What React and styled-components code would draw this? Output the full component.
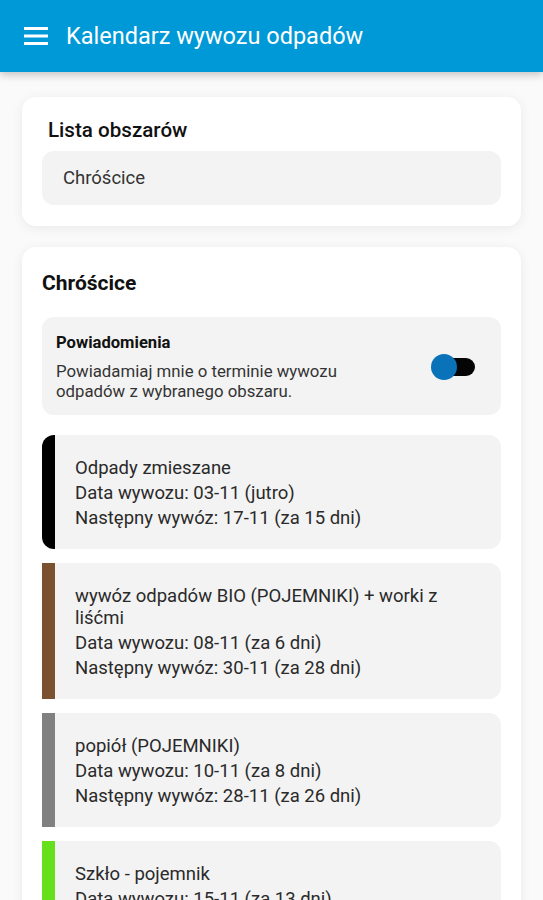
import React from 'react';
import styled, { createGlobalStyle } from 'styled-components';

const GlobalStyle = createGlobalStyle`
  body {
    margin: 0;
    background-color: #fafafa;
    font-family: Roboto, "Noto Sans", sans-serif;
    color: #222;
  }
`;

const AppBar = styled.header`
  height: 72px;
  background-color: #0099d7;
  display: flex;
  align-items: center;
  padding: 0 24px;
  gap: 18px;
  box-shadow: 0 3px 8px rgba(0, 0, 0, 0.22);
  position: relative;
`;

const MenuIcon = styled.svg`
  width: 24px;
  height: 24px;
  display: block;
`;

const Title = styled.h1`
  margin: 0;
  font-size: 23.5px;
  font-weight: 400;
  color: #ffffff;
`;

const Content = styled.main`
  padding: 25px 22px 0;
  display: flex;
  flex-direction: column;
  gap: 21px;
`;

const Card = styled.section`
  background-color: #ffffff;
  border-radius: 14px;
  padding: 21px 20px 21px;
  box-shadow: 0 2px 12px rgba(0, 0, 0, 0.07);
`;

const CardLabel = styled.h2`
  margin: 0 0 9px 6px;
  font-size: 20.6px;
  line-height: 24px;
  font-weight: 500;
  color: #111;
`;

const Select = styled.div`
  height: 54px;
  border-radius: 12px;
  background-color: #f3f3f3;
  display: flex;
  align-items: center;
  padding: 0 21px;
  font-size: 18.5px;
  color: #333;
`;

const AreaTitle = styled.h2`
  margin: 3px 0 22px;
  font-size: 21px;
  line-height: 24px;
  font-weight: 700;
  color: #111;
`;

const NotifyBox = styled.div`
  background-color: #f3f3f3;
  border-radius: 12px;
  padding: 16px 26px 14px 14px;
  display: flex;
  align-items: center;
  justify-content: space-between;
  gap: 20px;
`;

const NotifyText = styled.div`
  max-width: 310px;
`;

const NotifyTitle = styled.div`
  font-size: 16.6px;
  line-height: 20px;
  font-weight: 700;
  color: #111;
  margin-bottom: 8px;
`;

const NotifyDesc = styled.div`
  font-size: 16.8px;
  line-height: 20px;
  color: #333;
`;

const Switch = styled.div`
  position: relative;
  width: 44px;
  height: 26px;
  flex-shrink: 0;
  display: flex;
  align-items: center;
`;

const Track = styled.div`
  margin-left: 8px;
  width: 36px;
  height: 18px;
  border-radius: 9px;
  background-color: #050505;
`;

const Knob = styled.div`
  position: absolute;
  left: 0;
  top: 0;
  width: 26px;
  height: 26px;
  border-radius: 50%;
  background-color: #0a72b8;
`;

const List = styled.div`
  margin-top: 20px;
  display: flex;
  flex-direction: column;
  gap: 14px;
`;

const Item = styled.div`
  background-color: #f3f3f3;
  border-left: 13px solid ${(p) => p.$color};
  border-radius: ${(p) => (p.$rounded ? '12px' : '0 12px 12px 0')};
  padding: 22px 60px 20px 20px;
`;

const Line = styled.p`
  margin: 0;
  font-size: 18.5px;
  line-height: 22px;
  color: #2a2a2a;
  & + & {
    margin-top: 3px;
  }
`;

const items = [
  {
    color: '#000000',
    rounded: true,
    name: 'Odpady zmieszane',
    date: '03-11 (jutro)',
    next: '17-11 (za 15 dni)',
  },
  {
    color: '#7a5230',
    name: 'wywóz odpadów BIO (POJEMNIKI) + worki z liśćmi',
    date: '08-11 (za 6 dni)',
    next: '30-11 (za 28 dni)',
  },
  {
    color: '#808080',
    name: 'popiół (POJEMNIKI)',
    date: '10-11 (za 8 dni)',
    next: '28-11 (za 26 dni)',
  },
  {
    color: '#66e01c',
    name: 'Szkło - pojemnik',
    date: '15-11 (za 13 dni)',
    next: '29-11 (za 27 dni)',
  },
];

const App = () => {
  return (
    <>
      <GlobalStyle />
      <AppBar>
        <MenuIcon viewBox="0 0 24 24">
          <path d="M0 3h24v3H0zM0 10.5h24v3H0zM0 18h24v3H0z" fill="#fff" />
        </MenuIcon>
        <Title>Kalendarz wywozu odpadów</Title>
      </AppBar>
      <Content>
        <Card>
          <CardLabel>Lista obszarów</CardLabel>
          <Select>Chróścice</Select>
        </Card>
        <Card>
          <AreaTitle>Chróścice</AreaTitle>
          <NotifyBox>
            <NotifyText>
              <NotifyTitle>Powiadomienia</NotifyTitle>
              <NotifyDesc>
                Powiadamiaj mnie o terminie wywozu odpadów z wybranego obszaru.
              </NotifyDesc>
            </NotifyText>
            <Switch>
              <Track />
              <Knob />
            </Switch>
          </NotifyBox>
          <List>
            {items.map((item) => (
              <Item key={item.name} $color={item.color} $rounded={item.rounded}>
                <Line>{item.name}</Line>
                <Line>Data wywozu: {item.date}</Line>
                <Line>Następny wywóz: {item.next}</Line>
              </Item>
            ))}
          </List>
        </Card>
      </Content>
    </>
  );
};

export default App;
